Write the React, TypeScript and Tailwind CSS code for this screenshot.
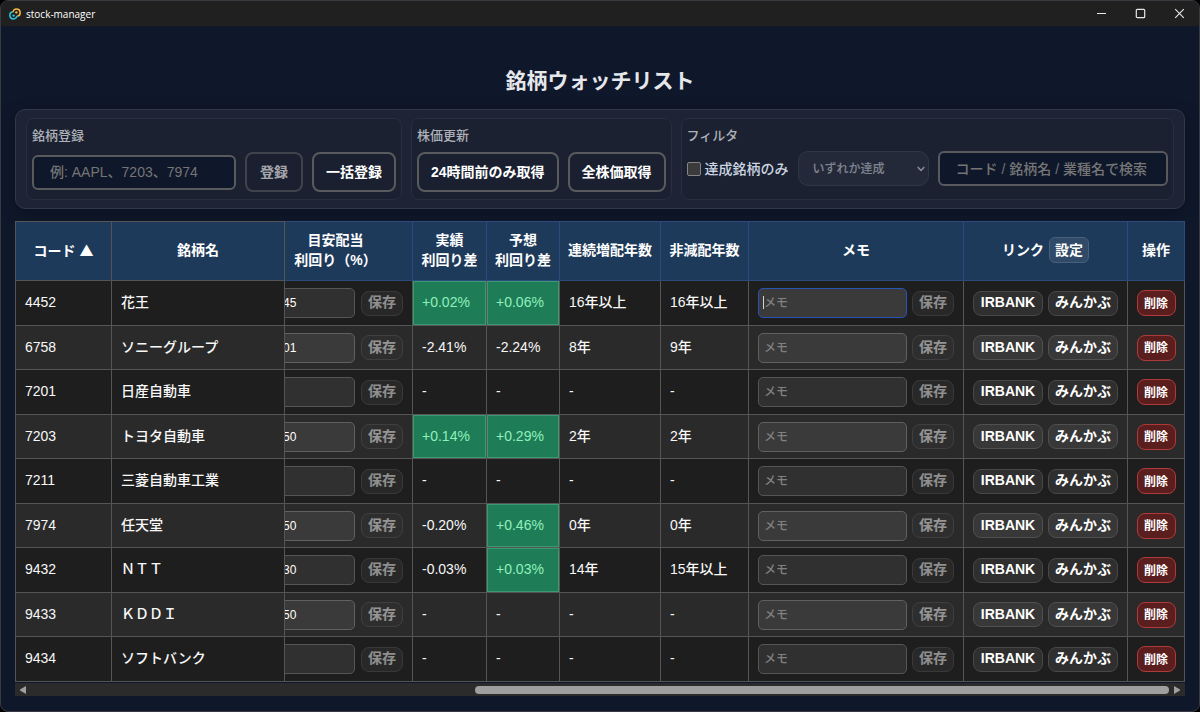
import type { ReactNode } from "react";

type Diff = { text: string; hit?: boolean };

type Stock = {
  code: string;
  name: string;
  target: string;
  actual: Diff;
  forecast: Diff;
  increaseYears: string;
  keepYears: string;
};

const none: Diff = { text: "-" };

const stocks: Stock[] = [
  { code: "4452", name: "花王", target: "2.45", actual: { text: "+0.02%", hit: true }, forecast: { text: "+0.06%", hit: true }, increaseYears: "16年以上", keepYears: "16年以上" },
  { code: "6758", name: "ソニーグループ", target: "3.01", actual: { text: "-2.41%" }, forecast: { text: "-2.24%" }, increaseYears: "8年", keepYears: "9年" },
  { code: "7201", name: "日産自動車", target: "", actual: none, forecast: none, increaseYears: "-", keepYears: "-" },
  { code: "7203", name: "トヨタ自動車", target: "2.50", actual: { text: "+0.14%", hit: true }, forecast: { text: "+0.29%", hit: true }, increaseYears: "2年", keepYears: "2年" },
  { code: "7211", name: "三菱自動車工業", target: "", actual: none, forecast: none, increaseYears: "-", keepYears: "-" },
  { code: "7974", name: "任天堂", target: "1.50", actual: { text: "-0.20%" }, forecast: { text: "+0.46%", hit: true }, increaseYears: "0年", keepYears: "0年" },
  { code: "9432", name: "ＮＴＴ", target: "3.30", actual: { text: "-0.03%" }, forecast: { text: "+0.03%", hit: true }, increaseYears: "14年", keepYears: "15年以上" },
  { code: "9433", name: "ＫＤＤＩ", target: "3.50", actual: none, forecast: none, increaseYears: "-", keepYears: "-" },
  { code: "9434", name: "ソフトバンク", target: "", actual: none, forecast: none, increaseYears: "-", keepYears: "-" },
];

function TitleBar() {
  return (
    <header className="flex h-[25px] items-center justify-between bg-[#202020] pr-[13px] pl-2">
      <div className="flex items-center gap-[5px]">
        <svg className="size-3" viewBox="0 0 24 24" fill="none" aria-hidden="true">
          <path d="M8 8.5a7.2 7.2 0 1 1 8.5 8" stroke="#f5b73b" strokeWidth="3" />
          <path d="M16 15.5a7.2 7.2 0 1 1-8.5-8" stroke="#2bc3d6" strokeWidth="3" />
          <circle cx="14.8" cy="8.8" r="2.4" fill="#f5b73b" />
          <circle cx="9.2" cy="15.2" r="2.4" fill="#2bc3d6" />
        </svg>
        <span className="font-['Open_Sans','Noto_Sans',sans-serif] text-[10px] leading-4 text-white">stock-manager</span>
      </div>
      <div className="flex items-center gap-[26px] text-[#e8e8e8]">
        <button type="button" aria-label="最小化" className="size-[13px]">
          <svg viewBox="0 0 13 13" className="size-[13px]" fill="none" stroke="currentColor" aria-hidden="true">
            <path d="M2 6.5h9" />
          </svg>
        </button>
        <button type="button" aria-label="最大化" className="size-[13px]">
          <svg viewBox="0 0 13 13" className="size-[13px]" fill="none" stroke="currentColor" strokeWidth="1.2" aria-hidden="true">
            <rect x="2.3" y="2.3" width="8.4" height="8.4" rx="1" />
          </svg>
        </button>
        <button type="button" aria-label="閉じる" className="size-[13px]">
          <svg viewBox="0 0 13 13" className="size-[13px]" fill="none" stroke="currentColor" strokeWidth="1.1" aria-hidden="true">
            <path d="M2.2 2.2l8.6 8.6M10.8 2.2l-8.6 8.6" />
          </svg>
        </button>
      </div>
    </header>
  );
}

function Group({ title, className, children }: { title: string; className: string; children: ReactNode }) {
  return (
    <section className={`rounded-lg border border-[#282f41] bg-[#1b2131] px-[5px] pt-2 pb-[7px] ${className}`}>
      <h2 className="text-[13px] leading-[18px] font-medium text-[#aeb1b8]">{title}</h2>
      {children}
    </section>
  );
}

function ActionButton({ children, disabled }: { children: ReactNode; disabled?: boolean }) {
  return (
    <button
      type="button"
      disabled={disabled}
      className="h-10 min-w-[58px] shrink-0 rounded-lg border-2 border-[#585a5e] bg-[#1a2030] px-3 text-sm font-bold whitespace-nowrap text-white disabled:opacity-60"
    >
      {children}
    </button>
  );
}

const searchField =
  "h-[35px] rounded-md border-2 border-[#585a5e] bg-[#0f172a] px-4 text-sm font-medium text-white placeholder:text-[#757575]";

function Toolbar() {
  return (
    <div className="flex h-[100px] gap-[9px] rounded-[10px] border border-[#303849] bg-[#1e2436] px-[10px] py-2 shadow-[0_4px_16px_rgba(0,0,0,0.25)]">
      <Group title="銘柄登録" className="shrink-0">
        <div className="mt-[7px] flex items-center gap-[9px]">
          <input type="text" aria-label="銘柄コード" placeholder="例: AAPL、7203、7974" className={`w-[204px] ${searchField}`} />
          <ActionButton disabled>登録</ActionButton>
          <ActionButton>一括登録</ActionButton>
        </div>
      </Group>
      <Group title="株価更新" className="shrink-0">
        <div className="mt-[7px] flex items-center gap-[9px]">
          <ActionButton>24時間前のみ取得</ActionButton>
          <ActionButton>全株価取得</ActionButton>
        </div>
      </Group>
      <Group title="フィルタ" className="min-w-0 flex-1">
        <div className="mt-[6px] flex items-center gap-[9px]">
          <label className="flex shrink-0 items-center gap-1 text-sm font-medium whitespace-nowrap text-[#cbd5e1]">
            <input type="checkbox" className="size-[14px] appearance-none rounded-[2px] border border-[#858585] bg-[#3b3b3b] checked:bg-[#3b82f6]" />
            達成銘柄のみ
          </label>
          <div className="relative w-[131px] shrink-0 opacity-50">
            <select
              disabled
              aria-label="達成条件"
              className="h-[35px] w-full appearance-none rounded-[10px] border border-[#434b5c] bg-[#2b3242] px-[14px] text-xs font-medium text-[#e5e7eb] disabled:opacity-100"
            >
              <option>いずれか達成</option>
            </select>
            <svg className="pointer-events-none absolute top-[14px] right-1 size-2" viewBox="0 0 8 8" fill="none" stroke="#ffffff" strokeWidth="1.5" aria-hidden="true">
              <path d="M.7 2l3.3 3.4L7.3 2" />
            </svg>
          </div>
          <input type="text" aria-label="検索" placeholder="コード / 銘柄名 / 業種名で検索" className={`min-w-0 flex-1 ${searchField}`} />
        </div>
      </Group>
    </div>
  );
}

function HeadCell({ children, className = "border-[#2a4b7c]" }: { children: ReactNode; className?: string }) {
  return (
    <th scope="col" className={`border-t border-r border-b bg-[#1e3a5a] px-0 pt-0 pb-[2px] text-center text-sm leading-5 font-bold whitespace-nowrap text-white ${className}`}>
      {children}
    </th>
  );
}

function TextCell({ children, className = "" }: { children: ReactNode; className?: string }) {
  return <td className={`border-r border-b border-[#555555] px-[9px] pt-0 pb-[2px] whitespace-nowrap ${className}`}>{children}</td>;
}

function ControlCell({ children }: { children: ReactNode }) {
  return <td className="overflow-hidden border-r border-b border-[#555555] px-[9px] py-0">{children}</td>;
}

function DiffCell({ diff }: { diff: Diff }) {
  return <TextCell className={diff.hit ? "bg-[#1e7d56] text-[#8ff0bd] inset-ring inset-ring-[#3b9873]" : ""}>{diff.text}</TextCell>;
}

function SaveButton() {
  return (
    <button
      type="button"
      disabled
      className="h-[25px] w-[42px] shrink-0 rounded-lg border border-[#555555] bg-[#333333] pb-[2px] text-sm leading-5 font-bold text-white opacity-50"
    >
      保存
    </button>
  );
}

function StockRow({ stock, active }: { stock: Stock; active: boolean }) {
  const fieldColors = "border-[#555555] bg-[#303030] group-even:border-[#606060] group-even:bg-[#3a3a3a]";
  const link =
    "flex h-[25px] w-[70px] items-center justify-center rounded-lg border border-[#484848] bg-[#2f2f2f] pb-[2px] font-bold text-white group-even:border-[#505050] group-even:bg-[#383838]";
  return (
    <tr className="group h-[45px] bg-[#1e1e1e] even:h-[44px] even:bg-[#2a2a2a]">
      <TextCell className="border-l">{stock.code}</TextCell>
      <TextCell>{stock.name}</TextCell>
      <ControlCell>
        <div className="flex items-center justify-end gap-[6px]">
          <input
            type="text"
            aria-label={`${stock.name} 目安配当利回り`}
            defaultValue={stock.target}
            className={`h-[30px] w-[89px] shrink-0 rounded-[5px] border px-[6px] text-xs text-white ${fieldColors}`}
          />
          <SaveButton />
        </div>
      </ControlCell>
      <DiffCell diff={stock.actual} />
      <DiffCell diff={stock.forecast} />
      <TextCell>{stock.increaseYears}</TextCell>
      <TextCell>{stock.keepYears}</TextCell>
      <ControlCell>
        <div className="flex items-center gap-[5px]">
          <div className="relative min-w-0 flex-1">
            <input
              type="text"
              aria-label={`${stock.name} メモ`}
              placeholder="メモ"
              className={`block h-[30px] w-full rounded-[5px] border px-[5px] text-xs font-medium text-white placeholder:text-[#808080] ${
                active ? "border-[#2653b5] bg-[#3a3a3a]" : fieldColors
              }`}
            />
            {active && <span className="absolute top-2 left-[5px] h-[13px] w-px bg-[#d4d4d4]" />}
          </div>
          <SaveButton />
        </div>
      </ControlCell>
      <ControlCell>
        <div className="flex gap-[5px]">
          <a href="#irbank" className={link}>
            IRBANK
          </a>
          <a href="#minkabu" className={link}>
            みんかぶ
          </a>
        </div>
      </ControlCell>
      <td className="border-r border-b border-[#555555] p-0">
        <button type="button" className="mx-auto block h-[26px] w-[39px] rounded-lg border border-[#b03a3a] bg-[#5a1e1f] pt-px text-xs leading-5 font-bold text-white">
          削除
        </button>
      </td>
    </tr>
  );
}

function StockTable() {
  return (
    <table className="mt-3 w-full table-fixed border-separate border-spacing-0 text-left text-sm leading-5 font-medium text-[#f8f8f8]">
      <colgroup>
        <col className="w-[97px]" />
        <col className="w-[173px]" />
        <col className="w-[128px]" />
        <col className="w-[74px]" />
        <col className="w-[73px]" />
        <col className="w-[101px]" />
        <col className="w-[88px]" />
        <col />
        <col className="w-[164px]" />
        <col className="w-[57px]" />
      </colgroup>
      <thead>
        <tr className="h-[60px]">
          <HeadCell className="border-l border-[#555555]">
            コード <span className="font-['Noto_Sans_CJK_JP',sans-serif]">▲</span>
          </HeadCell>
          <HeadCell className="border-[#555555]">銘柄名</HeadCell>
          <HeadCell>
            <div className="pr-[26px]">
              目安配当
              <br />
              利回り（%）
            </div>
          </HeadCell>
          <HeadCell>
            実績
            <br />
            利回り差
          </HeadCell>
          <HeadCell>
            予想
            <br />
            利回り差
          </HeadCell>
          <HeadCell>連続増配年数</HeadCell>
          <HeadCell>非減配年数</HeadCell>
          <HeadCell>メモ</HeadCell>
          <HeadCell>
            <div className="flex items-center justify-center gap-[5px]">
              リンク
              <button type="button" className="h-[26px] w-10 rounded-md border border-[#46607d] bg-[#304a68]">
                設定
              </button>
            </div>
          </HeadCell>
          <HeadCell>操作</HeadCell>
        </tr>
      </thead>
      <tbody>
        {stocks.map((stock, index) => (
          <StockRow key={stock.code} stock={stock} active={index === 0} />
        ))}
      </tbody>
    </table>
  );
}

function ScrollBar() {
  return (
    <div className="mt-px flex h-[13px] items-center bg-[#2b2b2b] px-1" aria-hidden="true">
      <svg className="size-2 shrink-0" viewBox="0 0 8 8" fill="#9f9f9f">
        <path d="M7 0v8L1 4.6v-1.2z" />
      </svg>
      <div className="mx-1 flex flex-1">
        <div className="ml-[39%] h-2 flex-1 rounded-full bg-[#9f9f9f]" />
      </div>
      <svg className="size-2 shrink-0" viewBox="0 0 8 8" fill="#9f9f9f">
        <path d="M1 0v8l6-3.4v-1.2z" />
      </svg>
    </div>
  );
}

export default function App() {
  return (
    <div className="flex min-h-screen bg-black font-['Liberation_Sans','Noto_Sans_CJK_JP',sans-serif]">
      <div className="flex-1 overflow-hidden rounded-lg border border-[#383a40] bg-[#0f172a]">
        <TitleBar />
        <main className="px-[14px] pt-[41px] pb-[14px]">
          <h1 className="mb-[14px] text-center text-[21px] leading-7 font-bold text-[#e5e7eb]">銘柄ウォッチリスト</h1>
          <Toolbar />
          <StockTable />
          <ScrollBar />
        </main>
      </div>
    </div>
  );
}
